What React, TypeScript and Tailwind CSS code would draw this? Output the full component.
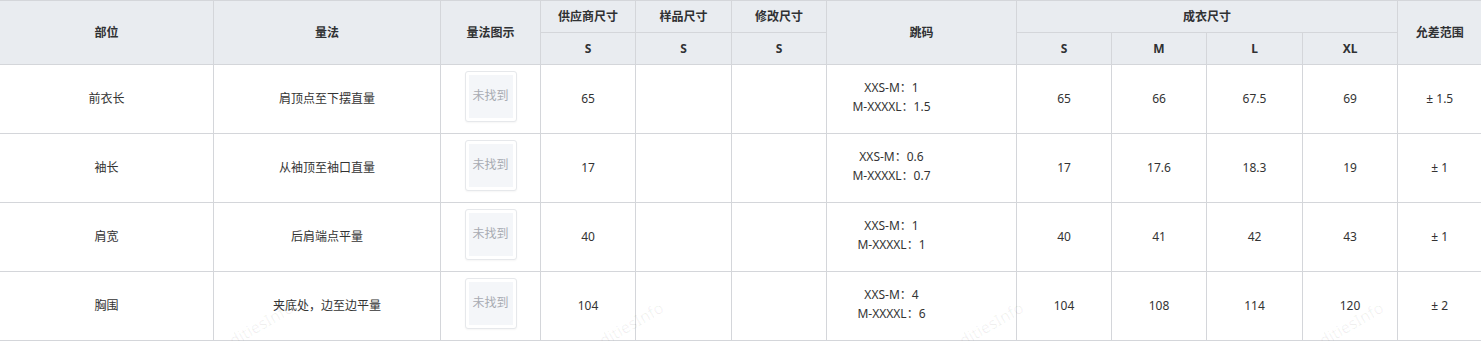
import React from 'react';

type Row = {
  part: string;
  method: string;
  supplier: string;
  jump: [string, string];
  sizes: [string, string, string, string];
  tol: string;
};

const rows: Row[] = [
  { part: '前衣长', method: '肩顶点至下摆直量', supplier: '65', jump: ['XXS-M：1', 'M-XXXXL：1.5'], sizes: ['65', '66', '67.5', '69'], tol: '± 1.5' },
  { part: '袖长', method: '从袖顶至袖口直量', supplier: '17', jump: ['XXS-M：0.6', 'M-XXXXL：0.7'], sizes: ['17', '17.6', '18.3', '19'], tol: '± 1' },
  { part: '肩宽', method: '后肩端点平量', supplier: '40', jump: ['XXS-M：1', 'M-XXXXL：1'], sizes: ['40', '41', '42', '43'], tol: '± 1' },
  { part: '胸围', method: '夹底处，边至边平量', supplier: '104', jump: ['XXS-M：4', 'M-XXXXL：6'], sizes: ['104', '108', '114', '120'], tol: '± 2' },
];

const widths = [213, 227, 100, 95, 96, 95, 190, 95, 95, 96, 95, 84];

// header + body cell styles
const th = 'border border-[#d4d6da] bg-[#e9ecf0] text-[12px] font-bold text-[#303133] text-center align-middle p-0';
const td = 'border border-[#d4d6da] bg-white text-[12px] text-[#333] text-center align-middle p-0 h-[69px]';

function ImagePlaceholder() {
  return (
    <div className="mx-auto mb-[6px] w-[52px] h-[51px] rounded-[3px] border border-[#e6e8eb] bg-white p-[3px] shadow-[0_1px_2px_rgba(0,0,0,0.04)]">
      <div className="w-full h-full bg-[#f4f6f9] flex items-center justify-center text-[12px] text-[#a8abb2]">
        未找到
      </div>
    </div>
  );
}

function Watermark({ right, top }: { right: number; top: number }) {
  return (
    <span
      className="absolute w-[140px] text-right text-[16px] text-black/[0.06] origin-right rotate-[-30deg] pointer-events-none select-none whitespace-nowrap"
      style={{ left: right - 140, top }}
    >
      commoditiesInfo
    </span>
  );
}

export default function App() {
  return (
    <div
      className="relative w-[1481px] h-[341px] overflow-hidden bg-white"
      style={{ fontFamily: '"Noto Sans", "Noto Sans CJK SC", sans-serif' }}
    >
      <table className="border-collapse table-fixed w-[1481px] -ml-px border-l-0">
        <colgroup>
          {widths.map((w, i) => (
            <col key={i} style={{ width: i === 0 ? w + 1 : w }} />
          ))}
        </colgroup>
        <thead>
          <tr>
            <th rowSpan={2} className={th}>部位</th>
            <th rowSpan={2} className={th}>量法</th>
            <th rowSpan={2} className={th}>量法图示</th>
            <th className={`${th} h-[32px]`}>供应商尺寸</th>
            <th className={th}>样品尺寸</th>
            <th className={th}>修改尺寸</th>
            <th rowSpan={2} className={th}>跳码</th>
            <th colSpan={4} className={th}>成衣尺寸</th>
            <th rowSpan={2} className={`${th} border-r-0`}>允差范围</th>
          </tr>
          <tr>
            <th className={`${th} h-[32px]`}>S</th>
            <th className={th}>S</th>
            <th className={th}>S</th>
            <th className={th}>S</th>
            <th className={th}>M</th>
            <th className={th}>L</th>
            <th className={th}>XL</th>
          </tr>
        </thead>
        <tbody>
          {rows.map((r) => (
            <tr key={r.part}>
              <td className={td}>{r.part}</td>
              <td className={td}>{r.method}</td>
              <td className={td}>
                <ImagePlaceholder />
              </td>
              <td className={td}>{r.supplier}</td>
              <td className={td}></td>
              <td className={td}></td>
              <td className={td}>
                <div className="pr-[60px] pb-[4px] leading-[19px]">
                  <div>{r.jump[0]}</div>
                  <div>{r.jump[1]}</div>
                </div>
              </td>
              {r.sizes.map((s, i) => (
                <td key={i} className={td}>{s}</td>
              ))}
              <td className={`${td} border-r-0`}>{r.tol}</td>
            </tr>
          ))}
        </tbody>
      </table>

      <Watermark right={292} top={294} />
      <Watermark right={662} top={294} />
      <Watermark right={1022} top={294} />
      <Watermark right={1382} top={294} />
    </div>
  );
}
